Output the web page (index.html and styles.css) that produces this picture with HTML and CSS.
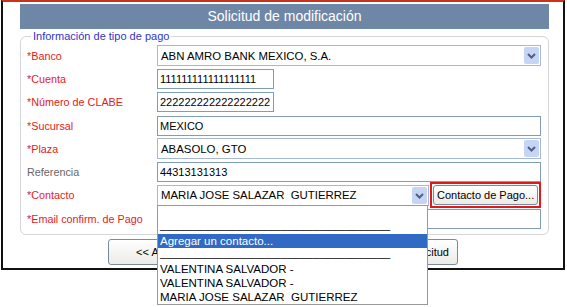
FILE: index.html
```html
<!DOCTYPE html>
<html lang="es">
<head>
    <meta charset="UTF-8">
    <title>Solicitud de modificación</title>
    <link rel="stylesheet" href="styles.css">
</head>
<body>
    <div class="frame">
        <div class="title">Solicitud de modificación</div>

        <fieldset class="pago">
            <legend>Información de tipo de pago</legend>
            <div class="row">
                <label class="req">*Banco</label>
                <div class="select wide"><span>ABN AMRO BANK MEXICO, S.A.</span><i class="arrow"></i></div>
            </div>
            <div class="row">
                <label class="req">*Cuenta</label>
                <input class="box short" type="text" value="111111111111111111">
            </div>
            <div class="row">
                <label class="req">*Número de CLABE</label>
                <input class="box short" type="text" value="222222222222222222">
            </div>
            <div class="row">
                <label class="req">*Sucursal</label>
                <input class="box wide" type="text" value="MEXICO">
            </div>
            <div class="row">
                <label class="req">*Plaza</label>
                <div class="select wide"><span>ABASOLO, GTO</span><i class="arrow"></i></div>
            </div>
            <div class="row">
                <label>Referencia</label>
                <input class="box wide" type="text" value="44313131313">
            </div>
            <div class="row">
                <label class="req">*Contacto</label>
                <div class="select contact"><span>MARIA JOSE SALAZAR&nbsp; GUTIERREZ</span><i class="arrow"></i></div>
                <div class="focus"><button class="btn small" type="button">Contacto de Pago...</button></div>
            </div>
            <div class="row">
                <label class="req">*Email confirm. de Pago</label>
                <input class="box wide" type="text" value="">
            </div>
        </fieldset>

        <div class="actions">
            <button class="btn big" type="button">&lt;&lt; Anterior</button>
            <button class="btn big send" type="button">Enviar Solicitud</button>
        </div>
    </div>

    <!-- open list of the Contacto select -->
    <ul class="list">
        <li>&nbsp;</li>
        <li class="sep">____________________________________</li>
        <li class="on">Agregar un contacto...</li>
        <li class="sep">____________________________________</li>
        <li>VALENTINA SALVADOR -</li>
        <li>VALENTINA SALVADOR -</li>
        <li>MARIA JOSE SALAZAR&nbsp; GUTIERREZ</li>
    </ul>
</body>
</html>
```

FILE: styles.css
```css
body {
    margin: 0;
    background: #fff;
    font-family: "Liberation Sans", Arial, sans-serif;
    position: relative;
    width: 567px;
    height: 307px;
    overflow: hidden;
}
.frame {
    margin: 0 2px 0 1px;
    height: 266px;
    border: 2px solid #111;
    border-top-color: #c8321a;
    background: #fff;
}
.title {
    margin: 2px 14px 0 17px;
    height: 25px;
    line-height: 25px;
    background: #6f87a7;
    color: #fff;
    font-size: 14px;
    text-align: center;
}
.pago {
    margin: 1px 14px 0 17px;
    padding: 2px 6px 4px 6px;
    border: 1px solid #d6d6d6;
    border-radius: 6px;
}
.pago legend {
    margin-left: 4px;
    padding: 0 2px;
    color: #3333c8;
    font-size: 11px;
}
.row {
    display: flex;
    align-items: center;
    height: 23.3px;
}
.row label {
    width: 130px;
    font-size: 10.8px;
    color: #666;
}
.row label.req {
    color: #e41b1b;
}
.box {
    box-sizing: border-box;
    height: 20px;
    margin: 0;
    padding: 0 2px;
    border: 1px solid #7f9db9;
    font-family: "Liberation Sans", Arial, sans-serif;
    font-size: 11px;
    color: #000;
}
.short {
    width: 117px;
}
.wide {
    width: 384px;
}
.select {
    box-sizing: border-box;
    display: flex;
    align-items: center;
    justify-content: space-between;
    height: 21px;
    padding: 0 1px 0 3px;
    border: 1px solid #a5b9d5;
    font-size: 11.4px;
}
.select.contact {
    width: 272px;
}
.arrow {
    width: 15px;
    height: 17px;
    background: #c6d5f5 url("data:image/svg+xml,%3Csvg xmlns='http://www.w3.org/2000/svg' width='15' height='17'%3E%3Cpath d='M4 7l3.5 3.5L11 7' fill='none' stroke='%234d6185' stroke-width='2'/%3E%3C/svg%3E") no-repeat;
    border-radius: 2px;
}
.focus {
    margin-left: 1px;
    padding: 1px;
    border: 2px solid #e01a1a;
}
.btn {
    font-family: "Liberation Sans", Arial, sans-serif;
    font-size: 11px;
    color: #000;
    background: linear-gradient(#fff, #ecebe6);
    border: 1px solid #7a8aa0;
    border-radius: 3px;
    cursor: pointer;
    white-space: nowrap;
}
.btn.small {
    display: block;
    height: 20px;
    padding: 0 3px;
}
.actions {
    display: flex;
    justify-content: space-between;
    margin-top: 4px;
    padding: 0 105px;
}
.btn.big {
    width: 110px;
    height: 26px;
}
.btn.send {
    width: auto;
    padding: 0 8px;
}
.list {
    position: absolute;
    left: 157px;
    top: 205px;
    width: 269px;
    margin: 0;
    padding: 0;
    list-style: none;
    background: #fff;
    border: 1px solid #999;
    font-size: 11.5px;
}
.list li {
    height: 14px;
    line-height: 14px;
    padding-left: 2px;
    white-space: nowrap;
    overflow: hidden;
}
.list li.sep {
    line-height: 10px;
}
.list li.on {
    background: #316ac5;
    color: #fff;
}
```
